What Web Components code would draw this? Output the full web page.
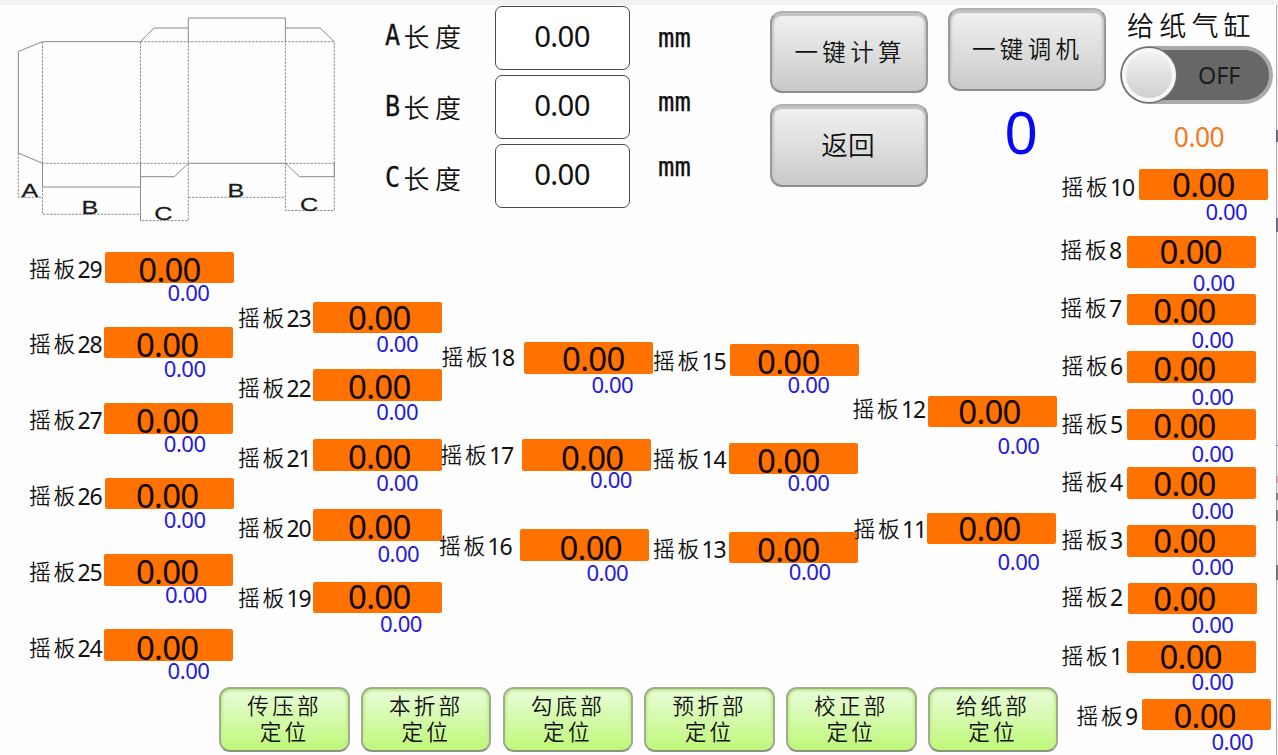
<!DOCTYPE html>
<html lang="zh-CN">
<head>
<meta charset="utf-8">
<title>摇板定位</title>
<style>
html,body{margin:0;padding:0;background:#fefefe}
body{width:1278px;height:755px;overflow:hidden;color:#111;font-family:"Noto Sans","Noto Sans CJK SC",sans-serif}
</style>
</head>
<body>
<hmi-screen></hmi-screen>
<script>
const define = (name, html, setup) => {
  const t = document.createElement('template');
  t.innerHTML = html;
  customElements.define(name, class extends HTMLElement {
    constructor() {
      super();
      this.attachShadow({mode: 'open'});
    }
    connectedCallback() {
      if (this.shadowRoot.childNodes.length) return;
      this.shadowRoot.append(t.content.cloneNode(true));
      if (setup) setup(this, this.shadowRoot);
    }
  });
};

/* carton blank with its A, B and C dimensions */
define('carton-drawing', `
<style>
:host{display:block;width:355px;height:235px}
svg{display:block}
.s{fill:none;stroke:#8a8a8a;stroke-width:1}
.d{fill:none;stroke:#8c8c8c;stroke-width:1;stroke-dasharray:2.4 1.2}
text{font-family:"Liberation Sans",sans-serif;font-size:18.5px;fill:#1a1a1a;stroke:#1a1a1a;stroke-width:.25}
</style>
<svg width="355" height="235" viewBox="0 0 355 235">
<path class="s" d="M42.5 41.7H140.5L154 28H188M188.3 42V18H285.4V42M285.4 28H320L334.3 41.7M42.5 41.7L18.3 51.5V153L42.5 163.3V187H140.5M140.5 163V221M140.5 176.7H174.5L188.3 163.3H285.4L299.5 176.7H334.3V163"/>
<path class="d" d="M42.5 42V214.3H140.5M18.3 153V197.3H42.5M140.5 42V220.6H188.3V42M140.5 41.7H334.3V210.5H285.4V42M42.5 163.3H188M285.4 163.3H334.3M188.3 197.3H285.4"/>
<g transform="scale(1.36 1)">
<text x="15.8" y="197">A</text><text x="60" y="214">B</text><text x="113.4" y="220.5">C</text><text x="167.2" y="197">B</text><text x="220.6" y="210.8">C</text>
</g>
</svg>`);

define('length-field', `
<style>
:host{display:grid;grid-template-columns:109px 135px 1fr;height:69px;font-size:29.3px;line-height:64px}
.name{display:flex;height:40px;line-height:40px;margin-top:var(--name,10px);font-size:26px;font-family:"Noto Sans CJK SC",sans-serif;font-weight:350;letter-spacing:5.5px}
.name b{width:17.5px;font:400 28.5px/40px "DejaVu Sans Mono",monospace;letter-spacing:0}
.name b i{display:block;font-style:normal;width:16px;margin-left:-1px;transform:scaleX(.88);transform-origin:0 50%;-webkit-text-stroke:.3px #111}
.box{box-sizing:border-box;width:135px;height:64px;border:1.6px solid #4a4a4a;border-radius:7px;background:#fff;text-align:center;line-height:59px;font-size:29.3px;letter-spacing:-.6px;padding-right:1px}
.unit{margin-left:28px;height:40px;margin-top:var(--unit,12px);font:27.3px/40px "DejaVu Sans Mono",monospace;-webkit-text-stroke:.25px #111}
</style>
<span class="name"><b><i></i></b><slot></slot></span><span class="box">0.00</span><span class="unit">mm</span>`,
(el, r) => { r.querySelector('i').textContent = el.getAttribute('letter'); });

define('grey-button', `
<style>
:host{display:flex;box-sizing:border-box;width:158px;height:82.5px;align-items:center;justify-content:center;border:2px solid #999;border-top-color:#b2b2b2;border-bottom-color:#8c8c8c;border-radius:12px;background:linear-gradient(#f2f2f2,#dedede 50%,#cacaca);box-shadow:inset 0 3px 1px #c3c3c3,inset 2px 0 2px #c8c8c8,inset -2px 0 2px #c8c8c8;font:350 23.5px/30px "Noto Sans CJK SC",sans-serif}
span{letter-spacing:var(--track,4.3px);margin-right:calc(var(--track,4.3px)*-1);padding:0 2px 2px 0}
</style><span><slot></slot></span>`);

define('green-button', `
<style>
:host{display:flex;box-sizing:border-box;width:130.5px;height:65px;padding-top:3px;justify-content:center;text-align:center;border:2px solid #a0ab94;border-bottom-color:#8a977b;border-radius:11px;background:linear-gradient(#eafcda,#d6fab0 45%,#bff878);box-shadow:inset 0 2px 2px #c0ee84,inset 2px 0 2px #c6f48c,inset -2px 0 2px #c6f48c;font:350 21.6px/26.3px "Noto Sans CJK SC",sans-serif;letter-spacing:3.2px;white-space:pre-line}
</style><span><slot></slot></span>`);

define('cylinder-switch', `
<style>
:host{display:flex;box-sizing:border-box;width:153.5px;height:58px;border:4px solid #aaa;border-radius:29px;background:#676767;align-items:center;font-size:23.3px;line-height:30px;color:#1c1c1c}
i{box-sizing:border-box;width:54px;height:54px;margin-left:-2px;border-radius:50%;border:4px solid #f7f7f7;background:linear-gradient(#f3f3f3,#cfcfcf);box-shadow:0 0 0 1.5px #707070;flex:none}
span{margin-left:22.5px}
</style><i></i><span><slot></slot></span>`);

/* one swing plate: name, set position on the bar, actual position below */
define('swing-plate', `
<style>
:host{display:grid;grid-template-rows:31.5px;height:31.5px;justify-items:start;align-items:start}
:host>*{grid-area:1/1}
.bar{width:129px;height:31.5px;border-radius:2px;background:#ff7200}
.name{display:flex;height:30px;font:350 21.8px/30px "Noto Sans CJK SC",sans-serif;letter-spacing:2.8px}
.name b{font:400 23px/32px "Noto Sans",sans-serif;letter-spacing:-1px;margin-left:-.8px}
.set,.act{width:80px;text-align:center}
.set{height:32px;font-size:33px;line-height:32px;letter-spacing:-.75px;color:#120800}
.act{height:20px;font-size:22.1px;line-height:20px;letter-spacing:-.5px;color:#2419dc}
</style>
<span class="bar"></span><span class="name"><slot></slot><b></b></span><span class="set">0.00</span><span class="act">0.00</span>`,
(el, r) => {
  const [n, bx, by, lx, ly, sx, sy, ax, ay, x0] = el.data;
  r.querySelector('b').textContent = n;
  const put = (c, x, y) => { r.querySelector(c).style.margin = `${y - by}px 0 0 ${x - x0}px`; };
  put('.bar', bx, by);
  put('.name', lx - 1, ly - 16.2);
  put('.set', sx - 40, sy - 16.2);
  put('.act', ax - 40, ay - 10.5);
});

/* bank of plates; fields are n, bar x/y, name x/y, set x/y, actual x/y */
const banks = {
  1: {x: 30, w: 209, top: 235, rows: [
    [29,105.3,251.7,30,269,169.5,270.2,188.5,293],[28,104.3,326.7,30,344,167.2,345,184.7,368.3],
    [27,104.3,403,30,420,167.2,421.5,184.7,443.3],[26,105.3,478,30,496,167.2,496.3,184.7,519.7],
    [25,104.3,554.3,30,572,167.2,572.7,186,594.3],[24,104.3,629.3,30,648.3,167.2,648.5,188.5,671]]},
  2: {x: 239, w: 202, top: 235, rows: [
    [23,313,301.7,239,318,379.3,318.5,397.2,343.3],[22,313,369.3,239,388,379.3,387.5,397.2,411.8],
    [21,313,439.3,239,458.5,379.3,457.5,397.2,483],[20,313,509.3,239,528.5,379.3,527.5,398.3,553.3],
    [19,313,582,239,598.3,379.3,597.7,401,623.3]]},
  3: {x: 441, w: 213, top: 235, rows: [
    [18,524,342,442.5,357.5,593.3,359,612.3,384.5],[17,521.7,439.3,441.5,455,592.2,458,611,479.3],
    [16,520.3,529.3,440,546.5,590.7,548,607.3,573]]},
  4: {x: 654, w: 200, top: 235, rows: [
    [15,730.3,344.3,654,361.5,788.3,362.5,808.5,384.5],[14,729.2,443,654,459.5,788.3,461.5,808.5,483],
    [13,729.2,532,654,549,788.3,550,809.7,572]]},
  5: {x: 854, w: 203, top: 235, rows: [
    [12,927.8,395.7,853.5,409,989.5,411.7,1018.5,446],[11,926.7,513,854.5,529,989.5,529,1018.5,562]]},
  6: {x: 1061, w: 215, top: 160, rows: [
    [10,1139,169,1062.5,188,1203.3,186,1226.3,212.3],[8,1126.7,236.7,1061.5,251,1190.7,253,1213.7,283.5],
    [7,1126.7,294.3,1061.5,309,1184.5,311.5,1212.5,340],[6,1126.7,352,1062.5,367,1184.5,369.3,1212.5,397.3],
    [5,1126.7,409.3,1062.5,424.5,1184.5,426.7,1212.5,453.7],[4,1126.7,468,1062.5,482.5,1184.5,484.5,1212.5,511],
    [3,1126.7,525.7,1062.5,540.5,1184.5,541.7,1212.5,567.5],[2,1128,583.3,1062.5,598,1184.5,599.3,1212.5,624.7],
    [1,1126.7,642,1062.5,656.5,1190.7,658,1212.5,682.5],[9,1141.7,699.3,1077.5,717,1204.7,716.5,1232.3,742]]}
};
define('plate-bank', `
<style>:host{display:flex;flex-direction:column;flex:none}</style>`,
(el, r) => {
  const b = banks[el.getAttribute('bank')];
  el.style.width = b.w + 'px';
  let y = b.top;
  for (const row of b.rows) {
    const p = document.createElement('swing-plate');
    p.textContent = '摇板';
    p.data = [...row, b.x];
    p.style.marginTop = (row[2] - y) + 'px';
    y = row[2] + 31.5;
    r.append(p);
  }
});

define('hmi-screen', `
<style>
:host{display:grid;grid-template:5px 750px/1061px 215px 2px;width:1278px;height:755px;background:#fefefe;overflow:hidden}
.strip{grid-column:1/-1;background:#f2f2f2}
.main{display:grid;grid-template-rows:230px 452px 68px;min-width:0}
.top{display:flex}
.lengths{width:384px;margin-left:31px;padding-top:1.4px}
.actions{display:grid;grid-template-columns:158px 158px;column-gap:19.5px;height:182px;align-content:start;grid-template-rows:93.5px auto;padding-top:5.7px}
.actions .up{margin-top:-2.5px}
.count{font-size:59px;line-height:60px;color:#0808f8;text-align:center;padding-right:11px;margin-top:-3px}
.banks{display:flex;padding-left:30px}
.foot{display:flex;gap:11.2px;padding-left:219.3px}
.side{display:flex;flex-direction:column}
.title{height:40.5px;line-height:39px;margin-left:66px;font-family:"Noto Sans CJK SC",sans-serif;font-weight:350;font-size:27px;letter-spacing:5.2px;white-space:nowrap}
cylinder-switch{margin-left:58.5px}
.speed{height:56px;line-height:67px;width:100px;text-align:center;margin-left:88px;font-size:26.4px;letter-spacing:-.5px;color:#f57918}
.edge{background:linear-gradient(90deg,transparent 50%,#fff0 50%),linear-gradient(transparent 125px,#252b4599 125px 137px,transparent 137px 213px,#252b4599 213px 227px,transparent 227px 440px,#3b38b588 440px 441px,transparent 441px 471px,#e06a7877 471px 478px,transparent 478px 488px,#555a 488px 495px,transparent 495px 505px,#555a 505px 516px,transparent 516px 560px,#4b4142aa 560px 575px,transparent 575px),linear-gradient(90deg,#b0b0b0 50%,#ededed 50%)}
</style>
<div class="strip"></div>
<div class="main">
  <div class="top">
    <carton-drawing style="margin-top:-5px"></carton-drawing>
    <div class="lengths">
      <length-field letter="A">长度</length-field>
      <length-field letter="B" style="--name:12px;--unit:7px">长度</length-field>
      <length-field letter="C" style="--name:14px;--unit:3px">长度</length-field>
    </div>
    <div class="actions">
      <grey-button>一键计算</grey-button>
      <grey-button class="up">一键调机</grey-button>
      <grey-button style="--track:0px;font-size:26.7px;font-weight:350">返回</grey-button>
      <div class="count">0</div>
    </div>
  </div>
  <div class="banks">
    <plate-bank bank="1"></plate-bank><plate-bank bank="2"></plate-bank><plate-bank bank="3"></plate-bank><plate-bank bank="4"></plate-bank><plate-bank bank="5"></plate-bank>
  </div>
  <div class="foot">
    <green-button>传压部
定位</green-button>
    <green-button>本折部
定位</green-button>
    <green-button>勾底部
定位</green-button>
    <green-button>预折部
定位</green-button>
    <green-button>校正部
定位</green-button>
    <green-button>给纸部
定位</green-button>
  </div>
</div>
<div class="side">
  <div class="title">给纸气缸</div>
  <cylinder-switch>OFF</cylinder-switch>
  <div class="speed">0.00</div>
  <plate-bank bank="6"></plate-bank>
</div>
<div class="edge"></div>`);
</script>
</body>
</html>
